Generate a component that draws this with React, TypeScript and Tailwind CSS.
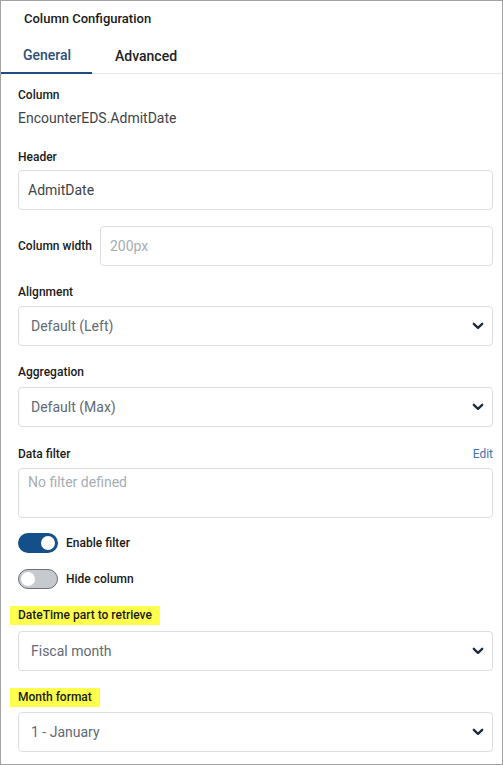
import React from 'react';

const Chevron: React.FC = () => (
  <svg width="12" height="8" viewBox="0 0 12 8" className="text-[#1d2b3a]">
    <path d="M1.8 1.8 L6 5.8 L10.2 1.8" fill="none" stroke="currentColor" strokeWidth="2.3" strokeLinecap="round" strokeLinejoin="round" />
  </svg>
);

const Label: React.FC<{ children: React.ReactNode; highlight?: boolean }> = ({ children, highlight }) => (
  <div
    className={
      highlight
        ? 'text-[12px] font-medium text-[#1a1a1a] bg-[#ffff4d] -ml-2 px-2 py-[3px] w-fit leading-[13px]'
        : 'text-[12px] font-medium text-[#1a1a1a] leading-[14px]'
    }
  >
    {children}
  </div>
);

const Select: React.FC<{ value: string }> = ({ value }) => (
  <div className="h-10 border border-[#dcdee3] rounded-[4px] flex items-center justify-between pl-[12px] pr-[8px]">
    <span className="text-[14px] text-[#616a75]">{value}</span>
    <Chevron />
  </div>
);

const Toggle: React.FC<{ on: boolean; label: string }> = ({ on, label }) => (
  <div className="flex items-center gap-[8px]">
    {on ? (
      <div className="w-10 h-5 rounded-full bg-[#13508a] flex items-center justify-end pr-[3px]">
        <div className="w-[14px] h-[14px] rounded-full bg-white" />
      </div>
    ) : (
      <div className="w-10 h-5 rounded-full bg-[#c6c9ce] border border-[#6b7079] flex items-center pl-[2px]">
        <div className="w-[14px] h-[14px] rounded-full bg-white" />
      </div>
    )}
    <span className="text-[12px] font-medium text-[#1a1a1a]">{label}</span>
  </div>
);

export default function App() {
  return (
    <div className="w-[503px] h-[765px] border border-[#a3a3a3] bg-white" style={{ fontFamily: 'Roboto, "Liberation Sans", sans-serif' }}>
      <div className="pl-[23px] pt-[8px] h-[38px] text-[13px] font-medium text-[#1a1a1a]">Column Configuration</div>
      <div className="flex border-b border-[#e5e7eb] h-[35px]">
        <div className="w-[91px] border-b-2 border-[#1d4f85] flex items-start pt-[6px] pl-[22px] text-[14px] font-medium text-[#2d4f7c] -mb-[1px]">
          General
        </div>
        <div className="pl-[23px] pt-[7px] text-[14px] font-medium text-[#222]">Advanced</div>
      </div>
      <div className="pl-[17px] pr-[9px] pt-[14px]">
        <Label>Column</Label>
        <div className="mt-[6px] text-[14px] text-[#3f4449]">EncounterEDS.AdmitDate</div>

        <div className="mt-[21px]">
          <Label>Header</Label>
        </div>
        <div className="mt-[6px] h-10 border border-[#dcdee3] rounded-[4px] flex items-center pl-[9px] text-[14px] text-[#3f4449]">
          AdmitDate
        </div>

        <div className="mt-[16px] flex items-center">
          <div className="w-[82px] text-[12px] font-medium text-[#1a1a1a]">Column width</div>
          <div className="flex-1 h-10 border border-[#dcdee3] rounded-[4px] flex items-center pl-[9px] text-[14px] text-[#a8adb4]">
            200px
          </div>
        </div>

        <div className="mt-[19px]">
          <Label>Alignment</Label>
        </div>
        <div className="mt-[7px]">
          <Select value="Default (Left)" />
        </div>

        <div className="mt-[19px]">
          <Label>Aggregation</Label>
        </div>
        <div className="mt-[8px]">
          <Select value="Default (Max)" />
        </div>

        <div className="mt-[18px] flex justify-between items-center">
          <Label>Data filter</Label>
          <span className="text-[12px] text-[#3f72b5]">Edit</span>
        </div>
        <div className="mt-[5px] h-[50px] border border-[#dcdee3] rounded-[4px] pl-[9px] pt-[3px] text-[14px] text-[#a8adb4]">
          No filter defined
        </div>

        <div className="mt-[15px]">
          <Toggle on label="Enable filter" />
        </div>
        <div className="mt-[16px]">
          <Toggle on={false} label="Hide column" />
        </div>

        <div className="mt-[17px]">
          <Label highlight>DateTime part to retrieve</Label>
        </div>
        <div className="mt-[6px]">
          <Select value="Fiscal month" />
        </div>

        <div className="mt-[17px]">
          <Label highlight>Month format</Label>
        </div>
        <div className="mt-[5px]">
          <Select value="1 - January" />
        </div>
      </div>
    </div>
  );
}
